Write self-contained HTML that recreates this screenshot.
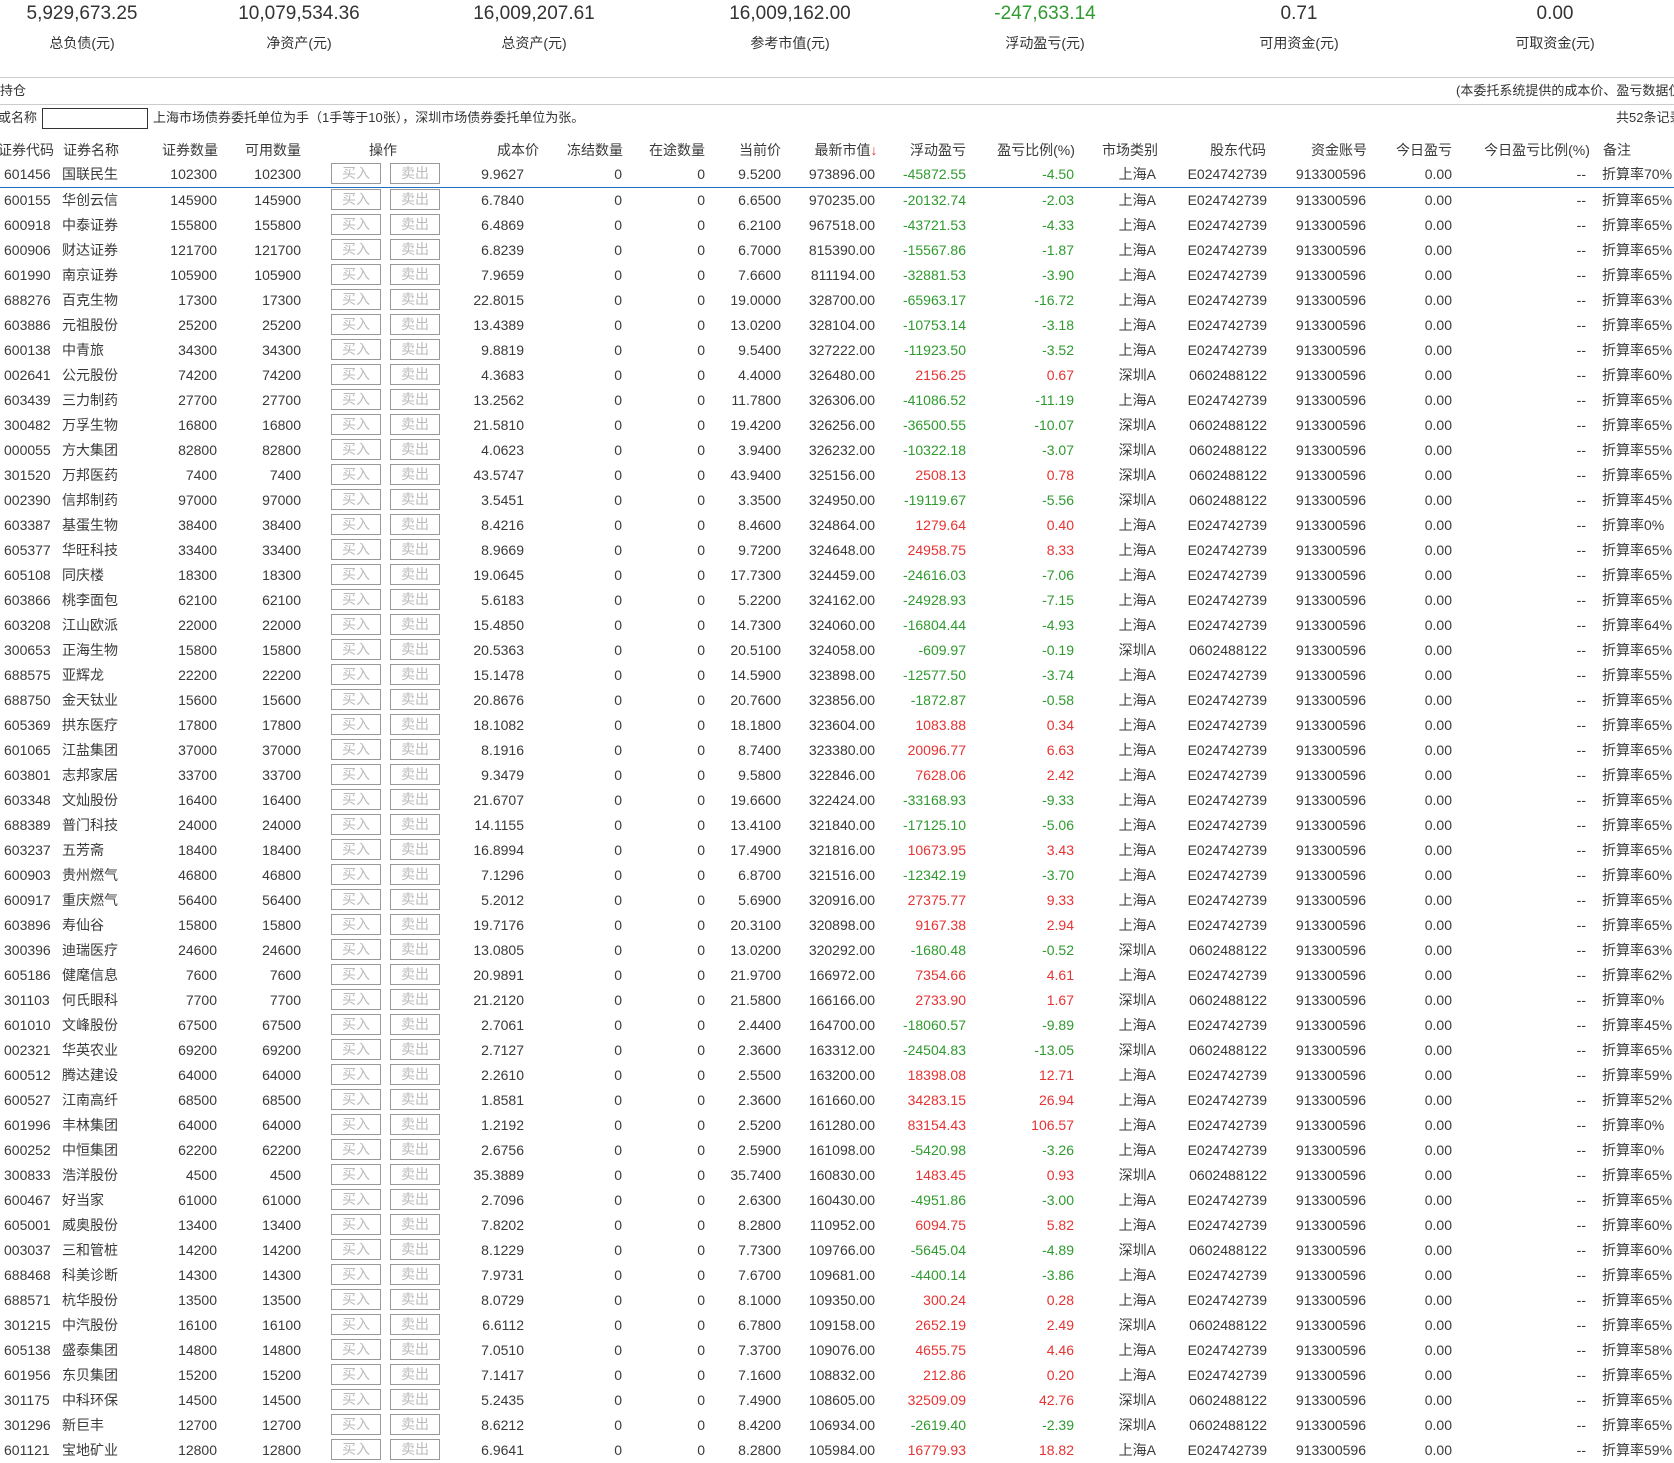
<!DOCTYPE html>
<html><head><meta charset="utf-8"><style>
*{margin:0;padding:0;box-sizing:border-box}
body{width:1674px;height:1460px;overflow:hidden;background:#fff;color:#333;font-family:"Liberation Sans","Noto Sans CJK SC",sans-serif;font-size:14px;position:relative}
.c{position:absolute;transform:translateX(-50%);white-space:nowrap}
.num{top:2px;font-size:19px;line-height:24px}
.lab{top:33px;font-size:14px;line-height:20px}
.hl{position:absolute;left:0;width:1674px;height:1px;background:#ccc}
.a{position:absolute;white-space:nowrap;line-height:20px}
table{position:absolute;left:0;top:161.5px;border-collapse:collapse;table-layout:fixed;width:1674px}
td{height:25px;padding:0 4px 0 0;text-align:right;white-space:nowrap;overflow:hidden;line-height:25px;color:#3a3a3a}
td:nth-child(1){text-align:left;padding-left:4px}
td:nth-child(2){text-align:left;padding-left:4px}
td:nth-child(5){text-align:left;padding-left:26px;font-size:0}
td:nth-child(18){text-align:left;padding-left:12px}
td b{display:inline-block;width:50px;height:21px;border:1px solid #999;color:#bbb;font-weight:normal;font-size:14px;line-height:19px;text-align:center;vertical-align:middle;margin-right:9px}
tr.n td:nth-child(11),tr.n td:nth-child(12){color:#2f9a2f}
tr.p td:nth-child(11),tr.p td:nth-child(12){color:#e53333}
tr:first-child td{border-bottom:1px solid #1f6fc0}
.h{position:absolute;top:140px;line-height:20px;white-space:nowrap;transform:translateX(-50%);color:#3a3a3a}
</style></head><body>
<div class="c num" style="left:82px">5,929,673.25</div><div class="c lab" style="left:82px">总负债(元)</div>
<div class="c num" style="left:299px">10,079,534.36</div><div class="c lab" style="left:299px">净资产(元)</div>
<div class="c num" style="left:534px">16,009,207.61</div><div class="c lab" style="left:534px">总资产(元)</div>
<div class="c num" style="left:790px">16,009,162.00</div><div class="c lab" style="left:790px">参考市值(元)</div>
<div class="c num" style="left:1045px;color:#2f9a2f">-247,633.14</div><div class="c lab" style="left:1045px">浮动盈亏(元)</div>
<div class="c num" style="left:1299px">0.71</div><div class="c lab" style="left:1299px">可用资金(元)</div>
<div class="c num" style="left:1555px">0.00</div><div class="c lab" style="left:1555px">可取资金(元)</div>
<div class="hl" style="top:77px"></div>
<div class="a" style="left:0;top:81px;font-size:13px">持仓</div>
<div class="a" style="left:1456px;top:81px;font-size:13px">(本委托系统提供的成本价、盈亏数据仅供参考)</div>
<div class="hl" style="top:104px"></div>
<div class="a" style="left:-2px;top:108px;font-size:13px">或名称</div>
<div style="position:absolute;left:42px;top:108px;width:106px;height:21px;border:1px solid #333"></div>
<div class="a" style="left:153px;top:108px;font-size:13px">上海市场债券委托单位为手（1手等于10张），深圳市场债券委托单位为张。</div>
<div class="a" style="left:1616px;top:108px;font-size:13px">共52条记录</div>
<span class="h" style="left:26px">证券代码</span><span class="h" style="left:91px">证券名称</span><span class="h" style="left:190px">证券数量</span><span class="h" style="left:273px">可用数量</span><span class="h" style="left:383px">操作</span><span class="h" style="left:518px">成本价</span><span class="h" style="left:595px">冻结数量</span><span class="h" style="left:677px">在途数量</span><span class="h" style="left:760px">当前价</span><span class="h" style="left:846px">最新市值<span style="color:#e53333">↓</span></span><span class="h" style="left:938px">浮动盈亏</span><span class="h" style="left:1036px">盈亏比例(%)</span><span class="h" style="left:1130px">市场类别</span><span class="h" style="left:1238px">股东代码</span><span class="h" style="left:1339px">资金账号</span><span class="h" style="left:1424px">今日盈亏</span><span class="h" style="left:1537px">今日盈亏比例(%)</span><span class="h" style="left:1617px">备注</span>
<table>
<colgroup><col style="width:58px"><col style="width:92px"><col style="width:71px"><col style="width:84px"><col style="width:140px"><col style="width:83px"><col style="width:98px"><col style="width:83px"><col style="width:76px"><col style="width:94px"><col style="width:91px"><col style="width:108px"><col style="width:82px"><col style="width:111px"><col style="width:99px"><col style="width:86px"><col style="width:134px"><col style="width:84px"></colgroup>
<tr class="n"><td>601456</td><td>国联民生</td><td>102300</td><td>102300</td><td><b>买入</b><b>卖出</b></td><td>9.9627</td><td>0</td><td>0</td><td>9.5200</td><td>973896.00</td><td>-45872.55</td><td>-4.50</td><td>上海A</td><td>E024742739</td><td>913300596</td><td>0.00</td><td>--</td><td>折算率70%</td></tr>
<tr class="n"><td>600155</td><td>华创云信</td><td>145900</td><td>145900</td><td><b>买入</b><b>卖出</b></td><td>6.7840</td><td>0</td><td>0</td><td>6.6500</td><td>970235.00</td><td>-20132.74</td><td>-2.03</td><td>上海A</td><td>E024742739</td><td>913300596</td><td>0.00</td><td>--</td><td>折算率65%</td></tr>
<tr class="n"><td>600918</td><td>中泰证券</td><td>155800</td><td>155800</td><td><b>买入</b><b>卖出</b></td><td>6.4869</td><td>0</td><td>0</td><td>6.2100</td><td>967518.00</td><td>-43721.53</td><td>-4.33</td><td>上海A</td><td>E024742739</td><td>913300596</td><td>0.00</td><td>--</td><td>折算率65%</td></tr>
<tr class="n"><td>600906</td><td>财达证券</td><td>121700</td><td>121700</td><td><b>买入</b><b>卖出</b></td><td>6.8239</td><td>0</td><td>0</td><td>6.7000</td><td>815390.00</td><td>-15567.86</td><td>-1.87</td><td>上海A</td><td>E024742739</td><td>913300596</td><td>0.00</td><td>--</td><td>折算率65%</td></tr>
<tr class="n"><td>601990</td><td>南京证券</td><td>105900</td><td>105900</td><td><b>买入</b><b>卖出</b></td><td>7.9659</td><td>0</td><td>0</td><td>7.6600</td><td>811194.00</td><td>-32881.53</td><td>-3.90</td><td>上海A</td><td>E024742739</td><td>913300596</td><td>0.00</td><td>--</td><td>折算率65%</td></tr>
<tr class="n"><td>688276</td><td>百克生物</td><td>17300</td><td>17300</td><td><b>买入</b><b>卖出</b></td><td>22.8015</td><td>0</td><td>0</td><td>19.0000</td><td>328700.00</td><td>-65963.17</td><td>-16.72</td><td>上海A</td><td>E024742739</td><td>913300596</td><td>0.00</td><td>--</td><td>折算率63%</td></tr>
<tr class="n"><td>603886</td><td>元祖股份</td><td>25200</td><td>25200</td><td><b>买入</b><b>卖出</b></td><td>13.4389</td><td>0</td><td>0</td><td>13.0200</td><td>328104.00</td><td>-10753.14</td><td>-3.18</td><td>上海A</td><td>E024742739</td><td>913300596</td><td>0.00</td><td>--</td><td>折算率65%</td></tr>
<tr class="n"><td>600138</td><td>中青旅</td><td>34300</td><td>34300</td><td><b>买入</b><b>卖出</b></td><td>9.8819</td><td>0</td><td>0</td><td>9.5400</td><td>327222.00</td><td>-11923.50</td><td>-3.52</td><td>上海A</td><td>E024742739</td><td>913300596</td><td>0.00</td><td>--</td><td>折算率65%</td></tr>
<tr class="p"><td>002641</td><td>公元股份</td><td>74200</td><td>74200</td><td><b>买入</b><b>卖出</b></td><td>4.3683</td><td>0</td><td>0</td><td>4.4000</td><td>326480.00</td><td>2156.25</td><td>0.67</td><td>深圳A</td><td>0602488122</td><td>913300596</td><td>0.00</td><td>--</td><td>折算率60%</td></tr>
<tr class="n"><td>603439</td><td>三力制药</td><td>27700</td><td>27700</td><td><b>买入</b><b>卖出</b></td><td>13.2562</td><td>0</td><td>0</td><td>11.7800</td><td>326306.00</td><td>-41086.52</td><td>-11.19</td><td>上海A</td><td>E024742739</td><td>913300596</td><td>0.00</td><td>--</td><td>折算率65%</td></tr>
<tr class="n"><td>300482</td><td>万孚生物</td><td>16800</td><td>16800</td><td><b>买入</b><b>卖出</b></td><td>21.5810</td><td>0</td><td>0</td><td>19.4200</td><td>326256.00</td><td>-36500.55</td><td>-10.07</td><td>深圳A</td><td>0602488122</td><td>913300596</td><td>0.00</td><td>--</td><td>折算率65%</td></tr>
<tr class="n"><td>000055</td><td>方大集团</td><td>82800</td><td>82800</td><td><b>买入</b><b>卖出</b></td><td>4.0623</td><td>0</td><td>0</td><td>3.9400</td><td>326232.00</td><td>-10322.18</td><td>-3.07</td><td>深圳A</td><td>0602488122</td><td>913300596</td><td>0.00</td><td>--</td><td>折算率55%</td></tr>
<tr class="p"><td>301520</td><td>万邦医药</td><td>7400</td><td>7400</td><td><b>买入</b><b>卖出</b></td><td>43.5747</td><td>0</td><td>0</td><td>43.9400</td><td>325156.00</td><td>2508.13</td><td>0.78</td><td>深圳A</td><td>0602488122</td><td>913300596</td><td>0.00</td><td>--</td><td>折算率65%</td></tr>
<tr class="n"><td>002390</td><td>信邦制药</td><td>97000</td><td>97000</td><td><b>买入</b><b>卖出</b></td><td>3.5451</td><td>0</td><td>0</td><td>3.3500</td><td>324950.00</td><td>-19119.67</td><td>-5.56</td><td>深圳A</td><td>0602488122</td><td>913300596</td><td>0.00</td><td>--</td><td>折算率45%</td></tr>
<tr class="p"><td>603387</td><td>基蛋生物</td><td>38400</td><td>38400</td><td><b>买入</b><b>卖出</b></td><td>8.4216</td><td>0</td><td>0</td><td>8.4600</td><td>324864.00</td><td>1279.64</td><td>0.40</td><td>上海A</td><td>E024742739</td><td>913300596</td><td>0.00</td><td>--</td><td>折算率0%</td></tr>
<tr class="p"><td>605377</td><td>华旺科技</td><td>33400</td><td>33400</td><td><b>买入</b><b>卖出</b></td><td>8.9669</td><td>0</td><td>0</td><td>9.7200</td><td>324648.00</td><td>24958.75</td><td>8.33</td><td>上海A</td><td>E024742739</td><td>913300596</td><td>0.00</td><td>--</td><td>折算率65%</td></tr>
<tr class="n"><td>605108</td><td>同庆楼</td><td>18300</td><td>18300</td><td><b>买入</b><b>卖出</b></td><td>19.0645</td><td>0</td><td>0</td><td>17.7300</td><td>324459.00</td><td>-24616.03</td><td>-7.06</td><td>上海A</td><td>E024742739</td><td>913300596</td><td>0.00</td><td>--</td><td>折算率65%</td></tr>
<tr class="n"><td>603866</td><td>桃李面包</td><td>62100</td><td>62100</td><td><b>买入</b><b>卖出</b></td><td>5.6183</td><td>0</td><td>0</td><td>5.2200</td><td>324162.00</td><td>-24928.93</td><td>-7.15</td><td>上海A</td><td>E024742739</td><td>913300596</td><td>0.00</td><td>--</td><td>折算率65%</td></tr>
<tr class="n"><td>603208</td><td>江山欧派</td><td>22000</td><td>22000</td><td><b>买入</b><b>卖出</b></td><td>15.4850</td><td>0</td><td>0</td><td>14.7300</td><td>324060.00</td><td>-16804.44</td><td>-4.93</td><td>上海A</td><td>E024742739</td><td>913300596</td><td>0.00</td><td>--</td><td>折算率64%</td></tr>
<tr class="n"><td>300653</td><td>正海生物</td><td>15800</td><td>15800</td><td><b>买入</b><b>卖出</b></td><td>20.5363</td><td>0</td><td>0</td><td>20.5100</td><td>324058.00</td><td>-609.97</td><td>-0.19</td><td>深圳A</td><td>0602488122</td><td>913300596</td><td>0.00</td><td>--</td><td>折算率65%</td></tr>
<tr class="n"><td>688575</td><td>亚辉龙</td><td>22200</td><td>22200</td><td><b>买入</b><b>卖出</b></td><td>15.1478</td><td>0</td><td>0</td><td>14.5900</td><td>323898.00</td><td>-12577.50</td><td>-3.74</td><td>上海A</td><td>E024742739</td><td>913300596</td><td>0.00</td><td>--</td><td>折算率55%</td></tr>
<tr class="n"><td>688750</td><td>金天钛业</td><td>15600</td><td>15600</td><td><b>买入</b><b>卖出</b></td><td>20.8676</td><td>0</td><td>0</td><td>20.7600</td><td>323856.00</td><td>-1872.87</td><td>-0.58</td><td>上海A</td><td>E024742739</td><td>913300596</td><td>0.00</td><td>--</td><td>折算率65%</td></tr>
<tr class="p"><td>605369</td><td>拱东医疗</td><td>17800</td><td>17800</td><td><b>买入</b><b>卖出</b></td><td>18.1082</td><td>0</td><td>0</td><td>18.1800</td><td>323604.00</td><td>1083.88</td><td>0.34</td><td>上海A</td><td>E024742739</td><td>913300596</td><td>0.00</td><td>--</td><td>折算率65%</td></tr>
<tr class="p"><td>601065</td><td>江盐集团</td><td>37000</td><td>37000</td><td><b>买入</b><b>卖出</b></td><td>8.1916</td><td>0</td><td>0</td><td>8.7400</td><td>323380.00</td><td>20096.77</td><td>6.63</td><td>上海A</td><td>E024742739</td><td>913300596</td><td>0.00</td><td>--</td><td>折算率65%</td></tr>
<tr class="p"><td>603801</td><td>志邦家居</td><td>33700</td><td>33700</td><td><b>买入</b><b>卖出</b></td><td>9.3479</td><td>0</td><td>0</td><td>9.5800</td><td>322846.00</td><td>7628.06</td><td>2.42</td><td>上海A</td><td>E024742739</td><td>913300596</td><td>0.00</td><td>--</td><td>折算率65%</td></tr>
<tr class="n"><td>603348</td><td>文灿股份</td><td>16400</td><td>16400</td><td><b>买入</b><b>卖出</b></td><td>21.6707</td><td>0</td><td>0</td><td>19.6600</td><td>322424.00</td><td>-33168.93</td><td>-9.33</td><td>上海A</td><td>E024742739</td><td>913300596</td><td>0.00</td><td>--</td><td>折算率65%</td></tr>
<tr class="n"><td>688389</td><td>普门科技</td><td>24000</td><td>24000</td><td><b>买入</b><b>卖出</b></td><td>14.1155</td><td>0</td><td>0</td><td>13.4100</td><td>321840.00</td><td>-17125.10</td><td>-5.06</td><td>上海A</td><td>E024742739</td><td>913300596</td><td>0.00</td><td>--</td><td>折算率65%</td></tr>
<tr class="p"><td>603237</td><td>五芳斋</td><td>18400</td><td>18400</td><td><b>买入</b><b>卖出</b></td><td>16.8994</td><td>0</td><td>0</td><td>17.4900</td><td>321816.00</td><td>10673.95</td><td>3.43</td><td>上海A</td><td>E024742739</td><td>913300596</td><td>0.00</td><td>--</td><td>折算率65%</td></tr>
<tr class="n"><td>600903</td><td>贵州燃气</td><td>46800</td><td>46800</td><td><b>买入</b><b>卖出</b></td><td>7.1296</td><td>0</td><td>0</td><td>6.8700</td><td>321516.00</td><td>-12342.19</td><td>-3.70</td><td>上海A</td><td>E024742739</td><td>913300596</td><td>0.00</td><td>--</td><td>折算率60%</td></tr>
<tr class="p"><td>600917</td><td>重庆燃气</td><td>56400</td><td>56400</td><td><b>买入</b><b>卖出</b></td><td>5.2012</td><td>0</td><td>0</td><td>5.6900</td><td>320916.00</td><td>27375.77</td><td>9.33</td><td>上海A</td><td>E024742739</td><td>913300596</td><td>0.00</td><td>--</td><td>折算率65%</td></tr>
<tr class="p"><td>603896</td><td>寿仙谷</td><td>15800</td><td>15800</td><td><b>买入</b><b>卖出</b></td><td>19.7176</td><td>0</td><td>0</td><td>20.3100</td><td>320898.00</td><td>9167.38</td><td>2.94</td><td>上海A</td><td>E024742739</td><td>913300596</td><td>0.00</td><td>--</td><td>折算率65%</td></tr>
<tr class="n"><td>300396</td><td>迪瑞医疗</td><td>24600</td><td>24600</td><td><b>买入</b><b>卖出</b></td><td>13.0805</td><td>0</td><td>0</td><td>13.0200</td><td>320292.00</td><td>-1680.48</td><td>-0.52</td><td>深圳A</td><td>0602488122</td><td>913300596</td><td>0.00</td><td>--</td><td>折算率63%</td></tr>
<tr class="p"><td>605186</td><td>健麾信息</td><td>7600</td><td>7600</td><td><b>买入</b><b>卖出</b></td><td>20.9891</td><td>0</td><td>0</td><td>21.9700</td><td>166972.00</td><td>7354.66</td><td>4.61</td><td>上海A</td><td>E024742739</td><td>913300596</td><td>0.00</td><td>--</td><td>折算率62%</td></tr>
<tr class="p"><td>301103</td><td>何氏眼科</td><td>7700</td><td>7700</td><td><b>买入</b><b>卖出</b></td><td>21.2120</td><td>0</td><td>0</td><td>21.5800</td><td>166166.00</td><td>2733.90</td><td>1.67</td><td>深圳A</td><td>0602488122</td><td>913300596</td><td>0.00</td><td>--</td><td>折算率0%</td></tr>
<tr class="n"><td>601010</td><td>文峰股份</td><td>67500</td><td>67500</td><td><b>买入</b><b>卖出</b></td><td>2.7061</td><td>0</td><td>0</td><td>2.4400</td><td>164700.00</td><td>-18060.57</td><td>-9.89</td><td>上海A</td><td>E024742739</td><td>913300596</td><td>0.00</td><td>--</td><td>折算率45%</td></tr>
<tr class="n"><td>002321</td><td>华英农业</td><td>69200</td><td>69200</td><td><b>买入</b><b>卖出</b></td><td>2.7127</td><td>0</td><td>0</td><td>2.3600</td><td>163312.00</td><td>-24504.83</td><td>-13.05</td><td>深圳A</td><td>0602488122</td><td>913300596</td><td>0.00</td><td>--</td><td>折算率65%</td></tr>
<tr class="p"><td>600512</td><td>腾达建设</td><td>64000</td><td>64000</td><td><b>买入</b><b>卖出</b></td><td>2.2610</td><td>0</td><td>0</td><td>2.5500</td><td>163200.00</td><td>18398.08</td><td>12.71</td><td>上海A</td><td>E024742739</td><td>913300596</td><td>0.00</td><td>--</td><td>折算率59%</td></tr>
<tr class="p"><td>600527</td><td>江南高纤</td><td>68500</td><td>68500</td><td><b>买入</b><b>卖出</b></td><td>1.8581</td><td>0</td><td>0</td><td>2.3600</td><td>161660.00</td><td>34283.15</td><td>26.94</td><td>上海A</td><td>E024742739</td><td>913300596</td><td>0.00</td><td>--</td><td>折算率52%</td></tr>
<tr class="p"><td>601996</td><td>丰林集团</td><td>64000</td><td>64000</td><td><b>买入</b><b>卖出</b></td><td>1.2192</td><td>0</td><td>0</td><td>2.5200</td><td>161280.00</td><td>83154.43</td><td>106.57</td><td>上海A</td><td>E024742739</td><td>913300596</td><td>0.00</td><td>--</td><td>折算率0%</td></tr>
<tr class="n"><td>600252</td><td>中恒集团</td><td>62200</td><td>62200</td><td><b>买入</b><b>卖出</b></td><td>2.6756</td><td>0</td><td>0</td><td>2.5900</td><td>161098.00</td><td>-5420.98</td><td>-3.26</td><td>上海A</td><td>E024742739</td><td>913300596</td><td>0.00</td><td>--</td><td>折算率0%</td></tr>
<tr class="p"><td>300833</td><td>浩洋股份</td><td>4500</td><td>4500</td><td><b>买入</b><b>卖出</b></td><td>35.3889</td><td>0</td><td>0</td><td>35.7400</td><td>160830.00</td><td>1483.45</td><td>0.93</td><td>深圳A</td><td>0602488122</td><td>913300596</td><td>0.00</td><td>--</td><td>折算率65%</td></tr>
<tr class="n"><td>600467</td><td>好当家</td><td>61000</td><td>61000</td><td><b>买入</b><b>卖出</b></td><td>2.7096</td><td>0</td><td>0</td><td>2.6300</td><td>160430.00</td><td>-4951.86</td><td>-3.00</td><td>上海A</td><td>E024742739</td><td>913300596</td><td>0.00</td><td>--</td><td>折算率65%</td></tr>
<tr class="p"><td>605001</td><td>威奥股份</td><td>13400</td><td>13400</td><td><b>买入</b><b>卖出</b></td><td>7.8202</td><td>0</td><td>0</td><td>8.2800</td><td>110952.00</td><td>6094.75</td><td>5.82</td><td>上海A</td><td>E024742739</td><td>913300596</td><td>0.00</td><td>--</td><td>折算率60%</td></tr>
<tr class="n"><td>003037</td><td>三和管桩</td><td>14200</td><td>14200</td><td><b>买入</b><b>卖出</b></td><td>8.1229</td><td>0</td><td>0</td><td>7.7300</td><td>109766.00</td><td>-5645.04</td><td>-4.89</td><td>深圳A</td><td>0602488122</td><td>913300596</td><td>0.00</td><td>--</td><td>折算率60%</td></tr>
<tr class="n"><td>688468</td><td>科美诊断</td><td>14300</td><td>14300</td><td><b>买入</b><b>卖出</b></td><td>7.9731</td><td>0</td><td>0</td><td>7.6700</td><td>109681.00</td><td>-4400.14</td><td>-3.86</td><td>上海A</td><td>E024742739</td><td>913300596</td><td>0.00</td><td>--</td><td>折算率65%</td></tr>
<tr class="p"><td>688571</td><td>杭华股份</td><td>13500</td><td>13500</td><td><b>买入</b><b>卖出</b></td><td>8.0729</td><td>0</td><td>0</td><td>8.1000</td><td>109350.00</td><td>300.24</td><td>0.28</td><td>上海A</td><td>E024742739</td><td>913300596</td><td>0.00</td><td>--</td><td>折算率65%</td></tr>
<tr class="p"><td>301215</td><td>中汽股份</td><td>16100</td><td>16100</td><td><b>买入</b><b>卖出</b></td><td>6.6112</td><td>0</td><td>0</td><td>6.7800</td><td>109158.00</td><td>2652.19</td><td>2.49</td><td>深圳A</td><td>0602488122</td><td>913300596</td><td>0.00</td><td>--</td><td>折算率65%</td></tr>
<tr class="p"><td>605138</td><td>盛泰集团</td><td>14800</td><td>14800</td><td><b>买入</b><b>卖出</b></td><td>7.0510</td><td>0</td><td>0</td><td>7.3700</td><td>109076.00</td><td>4655.75</td><td>4.46</td><td>上海A</td><td>E024742739</td><td>913300596</td><td>0.00</td><td>--</td><td>折算率58%</td></tr>
<tr class="p"><td>601956</td><td>东贝集团</td><td>15200</td><td>15200</td><td><b>买入</b><b>卖出</b></td><td>7.1417</td><td>0</td><td>0</td><td>7.1600</td><td>108832.00</td><td>212.86</td><td>0.20</td><td>上海A</td><td>E024742739</td><td>913300596</td><td>0.00</td><td>--</td><td>折算率65%</td></tr>
<tr class="p"><td>301175</td><td>中科环保</td><td>14500</td><td>14500</td><td><b>买入</b><b>卖出</b></td><td>5.2435</td><td>0</td><td>0</td><td>7.4900</td><td>108605.00</td><td>32509.09</td><td>42.76</td><td>深圳A</td><td>0602488122</td><td>913300596</td><td>0.00</td><td>--</td><td>折算率65%</td></tr>
<tr class="n"><td>301296</td><td>新巨丰</td><td>12700</td><td>12700</td><td><b>买入</b><b>卖出</b></td><td>8.6212</td><td>0</td><td>0</td><td>8.4200</td><td>106934.00</td><td>-2619.40</td><td>-2.39</td><td>深圳A</td><td>0602488122</td><td>913300596</td><td>0.00</td><td>--</td><td>折算率65%</td></tr>
<tr class="p"><td>601121</td><td>宝地矿业</td><td>12800</td><td>12800</td><td><b>买入</b><b>卖出</b></td><td>6.9641</td><td>0</td><td>0</td><td>8.2800</td><td>105984.00</td><td>16779.93</td><td>18.82</td><td>上海A</td><td>E024742739</td><td>913300596</td><td>0.00</td><td>--</td><td>折算率59%</td></tr>
</table>
</body></html>
